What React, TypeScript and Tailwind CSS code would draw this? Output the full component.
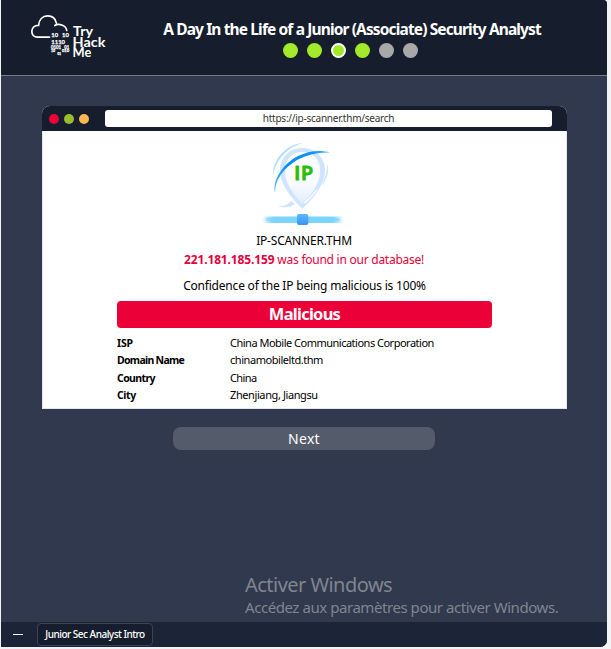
import React from "react";

const rows = [
  { label: "ISP", value: "China Mobile Communications Corporation", ls: "tracking-[-0.5px]", lls: "tracking-[-0.2px]" },
  { label: "Domain Name", value: "chinamobileltd.thm", ls: "tracking-[-0.45px]", lls: "tracking-[-0.7px]" },
  { label: "Country", value: "China", ls: "tracking-[-0.6px]", lls: "tracking-[-0.6px]" },
  { label: "City", value: "Zhenjiang, Jiangsu", ls: "tracking-[-0.4px]", lls: "tracking-[-0.4px]" },
];

function Logo() {
  return (
    <svg width="78" height="46" viewBox="30 13 78 46" className="shrink-0" fill="none" aria-label="TryHackMe">
      <path
        d="M49.5 37.2H37.5C33.8 37.2 31.8 34.3 31.8 31.3C31.8 27.7 34.8 25.2 38.6 25.4C39 19.6 42.6 15.9 47.6 15.9C52.4 15.9 55.6 18.9 56.4 23.1M54.8 25.5C56.3 24.5 58.5 24.1 60.4 24.6C64.2 25.3 66.6 28 66.7 30.5"
        stroke="white"
        strokeWidth="1.7"
        strokeLinecap="round"
      />
      <g fill="white" stroke="white" strokeWidth=".25" fontFamily="Lato, sans-serif" fontWeight="700">
        <text x="51.3" y="36.7" fontSize="6.4" textLength="6.8" lengthAdjust="spacingAndGlyphs">10</text>
        <text x="62" y="36.7" fontSize="6.4" textLength="6.8" lengthAdjust="spacingAndGlyphs">10</text>
        <text x="51.3" y="43.5" fontSize="6.4" textLength="13.7" lengthAdjust="spacingAndGlyphs">1110</text>
        <text x="51" y="48.7" fontSize="4.8" textLength="10" lengthAdjust="spacingAndGlyphs">0101</text>
        <text x="64.3" y="48.7" fontSize="4.8" textLength="5" lengthAdjust="spacingAndGlyphs">01</text>
        <text x="51" y="52.3" fontSize="3.5" textLength="4" lengthAdjust="spacingAndGlyphs">10</text>
        <text x="62" y="52.4" fontSize="3.8" textLength="7" lengthAdjust="spacingAndGlyphs">010</text>
        <text x="57.5" y="54.6" fontSize="3" textLength="3.5" lengthAdjust="spacingAndGlyphs">01</text>
      </g>
      <g fill="white" fontFamily="Lato, 'Noto Sans', sans-serif" fontWeight="700" fontSize="12.5">
        <text x="73" y="36" textLength="20" lengthAdjust="spacingAndGlyphs">Try</text>
        <text x="72.6" y="46.6" textLength="32.8" lengthAdjust="spacingAndGlyphs">Hack</text>
        <text x="72.6" y="57.2" textLength="18.8" lengthAdjust="spacingAndGlyphs">Me</text>
      </g>
    </svg>
  );
}

function ScannerArt() {
  return (
    <svg width="84" height="86" viewBox="261 140 84 86" fill="none" className="mr-[3px] block">
      <defs>
        <linearGradient id="bar" x1="262" x2="344" y1="0" y2="0" gradientUnits="userSpaceOnUse">
          <stop offset="0" stopColor="#6fd0fa" stopOpacity="0" />
          <stop offset=".14" stopColor="#7bd4fb" />
          <stop offset=".86" stopColor="#7bd4fb" />
          <stop offset="1" stopColor="#6fd0fa" stopOpacity="0" />
        </linearGradient>
        <linearGradient id="pin" x1="0" x2="0" y1="150" y2="206" gradientUnits="userSpaceOnUse">
          <stop offset="0" stopColor="#ffffff" />
          <stop offset=".6" stopColor="#f8faff" />
          <stop offset="1" stopColor="#dfeaff" />
        </linearGradient>
        <linearGradient id="node" x1="0" x2="0" y1="214" y2="225" gradientUnits="userSpaceOnUse">
          <stop offset="0" stopColor="#5cb8fb" />
          <stop offset="1" stopColor="#3b93f5" />
        </linearGradient>
        <linearGradient id="arc" x1="274" x2="330" y1="195" y2="150" gradientUnits="userSpaceOnUse">
          <stop offset="0" stopColor="#6bc0ff" />
          <stop offset=".4" stopColor="#078bfa" />
          <stop offset=".8" stopColor="#0d94ff" />
          <stop offset="1" stopColor="#6bc0ff" />
        </linearGradient>
      </defs>
      <path d="M302.500 209C293 199 280 186 280 170C280 157 290 148 302.500 148C315 148 325 157 325 170C325 186 312 199 302.500 209Z" fill="#cfe5ff" />
      <path d="M302.500 204C294 195 285 184 285 171C285 159 292 152 302.500 152C313 152 320 159 320 171C320 184 311 195 302.500 204Z" fill="url(#pin)" />
      <path d="M304.500 203C309.500 199 314 194 317 189.500" stroke="white" strokeWidth="1.3" />
      <path d="M273 176C272 160 286 144 303 143C287 147 276 160 273 176Z" fill="#b3dfff" />
      <path d="M327.500 164C329.500 171 327 180 321.500 186C325 178 327 171 327.500 164Z" fill="#cde7ff" />
      <path d="M277 206.500C284 208 291 207.500 295 204L291 201C287 205.500 282 206.500 277 206.500Z" fill="#cfe5ff" />
      <path d="M275 193C272 180 283 164 298 156C308 151 320 149.500 330 152.500C318 152 306 155 297 160C284 168 275 179 275 193Z" fill="url(#arc)" />
      <rect x="262" y="216.500" width="82" height="6.500" fill="url(#bar)" />
      <rect x="266" y="218.200" width="74" height="2.800" fill="url(#bar)" />
      <rect x="297" y="214" width="11.300" height="11" rx="2" fill="url(#node)" />
      <g fill="#2bbd05" stroke="#2bbd05" strokeWidth=".9" strokeLinejoin="round" fontFamily="Lato, sans-serif" fontWeight="700" fontSize="18.5">
        <text x="294.6" y="180.200">I</text>
        <text x="301.300" y="180.200">P</text>
      </g>
    </svg>
  );
}

export default function App() {
  return (
    <div className="h-[649px] w-[611px] overflow-hidden bg-[#f3f3f5] pl-px font-['Noto_Sans',sans-serif]">
      <div className="flex h-[647px] w-[606px] flex-col overflow-hidden rounded-tr-[4px] rounded-br-[7px] bg-[#31394e]">
        <header className="flex h-[76px] shrink-0 border-b border-[#747c85] bg-[#161d2c] pt-[13px] pl-[29px]">
          <Logo />
          <div className="ml-[43px] flex w-[399px] flex-col items-center pt-[5px]">
            <h1 className="ml-[3px] text-[15.5px] leading-[22px] font-bold tracking-[-0.87px] whitespace-nowrap text-white">
              A Day In the Life of a Junior (Associate) Security Analyst
            </h1>
            <div className="mt-[3px] flex gap-[9px]">
              <span className="size-[15px] rounded-full bg-[#a3ea2a]" />
              <span className="size-[15px] rounded-full bg-[#a3ea2a]" />
              <span className="size-[15px] rounded-full border-2 border-white bg-[#a3ea2a]" />
              <span className="size-[15px] rounded-full bg-[#a3ea2a]" />
              <span className="size-[15px] rounded-full bg-[#a9a9a9]" />
              <span className="size-[15px] rounded-full bg-[#a9a9a9]" />
            </div>
          </div>
        </header>

        <main className="flex flex-1 flex-col pt-[30px]">
          <section className="ml-[41px] flex h-[303px] w-[525px] flex-col overflow-hidden rounded-t-[8px] bg-white">
            <div className="flex h-[25px] shrink-0 items-center bg-[#161d2c] pl-[7px]">
              <span className="size-[10px] rounded-full bg-[#ee0038]" />
              <span className="ml-[5px] size-[10px] rounded-full bg-[#99bd2f]" />
              <span className="ml-[5px] size-[10px] rounded-full bg-[#ffb84f]" />
              <div className="ml-4 flex h-[17px] w-[447px] items-center justify-center rounded-[3px] bg-white pb-px text-[10px] tracking-[-0.25px] text-[#333]">
                https://ip-scanner.thm/search
              </div>
            </div>
            <div className="flex flex-1 flex-col items-center border border-t-0 border-[#e5e7ee] pt-[9px] text-black">
              <ScannerArt />
              <p className="mt-[8px] mr-px text-[12px] leading-[14px] tracking-[-0.18px]">IP-SCANNER.THM</p>
              <p className="mt-[5px] mr-px text-[12px] leading-[14px] tracking-[-0.25px] text-[#e4003a]">
                <b className="tracking-[-0.13px]">221.181.185.159</b> was found in our database!
              </p>
              <p className="mt-[12px] text-[12px] leading-[14px] tracking-[-0.2px]">
                Confidence of the IP being malicious is 100%
              </p>
              <div className="mt-[8px] flex h-[27px] w-[375px] shrink-0 items-center justify-center rounded-[4px] bg-[#ec0038] text-[16.5px] font-bold tracking-[-0.75px] text-white">
                Malicious
              </div>
              <dl className="mt-[6px] w-[375px] text-[11px] leading-[17.3px]">
                {rows.map((r) => (
                  <div key={r.label} className="flex">
                    <dt className={"w-[113px] pt-px text-[10.5px] leading-[16.3px] font-bold whitespace-nowrap " + r.lls}>
                      {r.label}
                    </dt>
                    <dd className={"whitespace-nowrap " + r.ls}>{r.value}</dd>
                  </div>
                ))}
              </dl>
            </div>
          </section>
          <button className="mt-[18px] ml-[172px] flex h-[23px] w-[262px] items-center justify-center rounded-[8px] bg-[#545b6a] pb-px text-[14px] tracking-[0.3px] text-white">
            Next
          </button>
          <div className="mt-[122px] ml-[244px] whitespace-nowrap text-[#80858f]">
            <p className="text-[20px] leading-[26px] tracking-[-0.53px]">Activer Windows</p>
            <p className="text-[15px] leading-[19px] tracking-[-0.44px]">Accédez aux paramètres pour activer Windows.</p>
          </div>
        </main>

        <footer className="flex h-[25px] shrink-0 items-center bg-[#1c2537] pl-[12px]">
          <span className="h-px w-[10px] bg-white" />
          <div className="ml-[14px] flex h-[23px] w-[116px] items-center justify-center rounded-[4px] border border-[#3b4354] bg-[#161d2c] text-[10px] font-medium tracking-[-0.5px] whitespace-nowrap text-white">
            Junior Sec Analyst Intro
          </div>
        </footer>
      </div>
    </div>
  );
}
